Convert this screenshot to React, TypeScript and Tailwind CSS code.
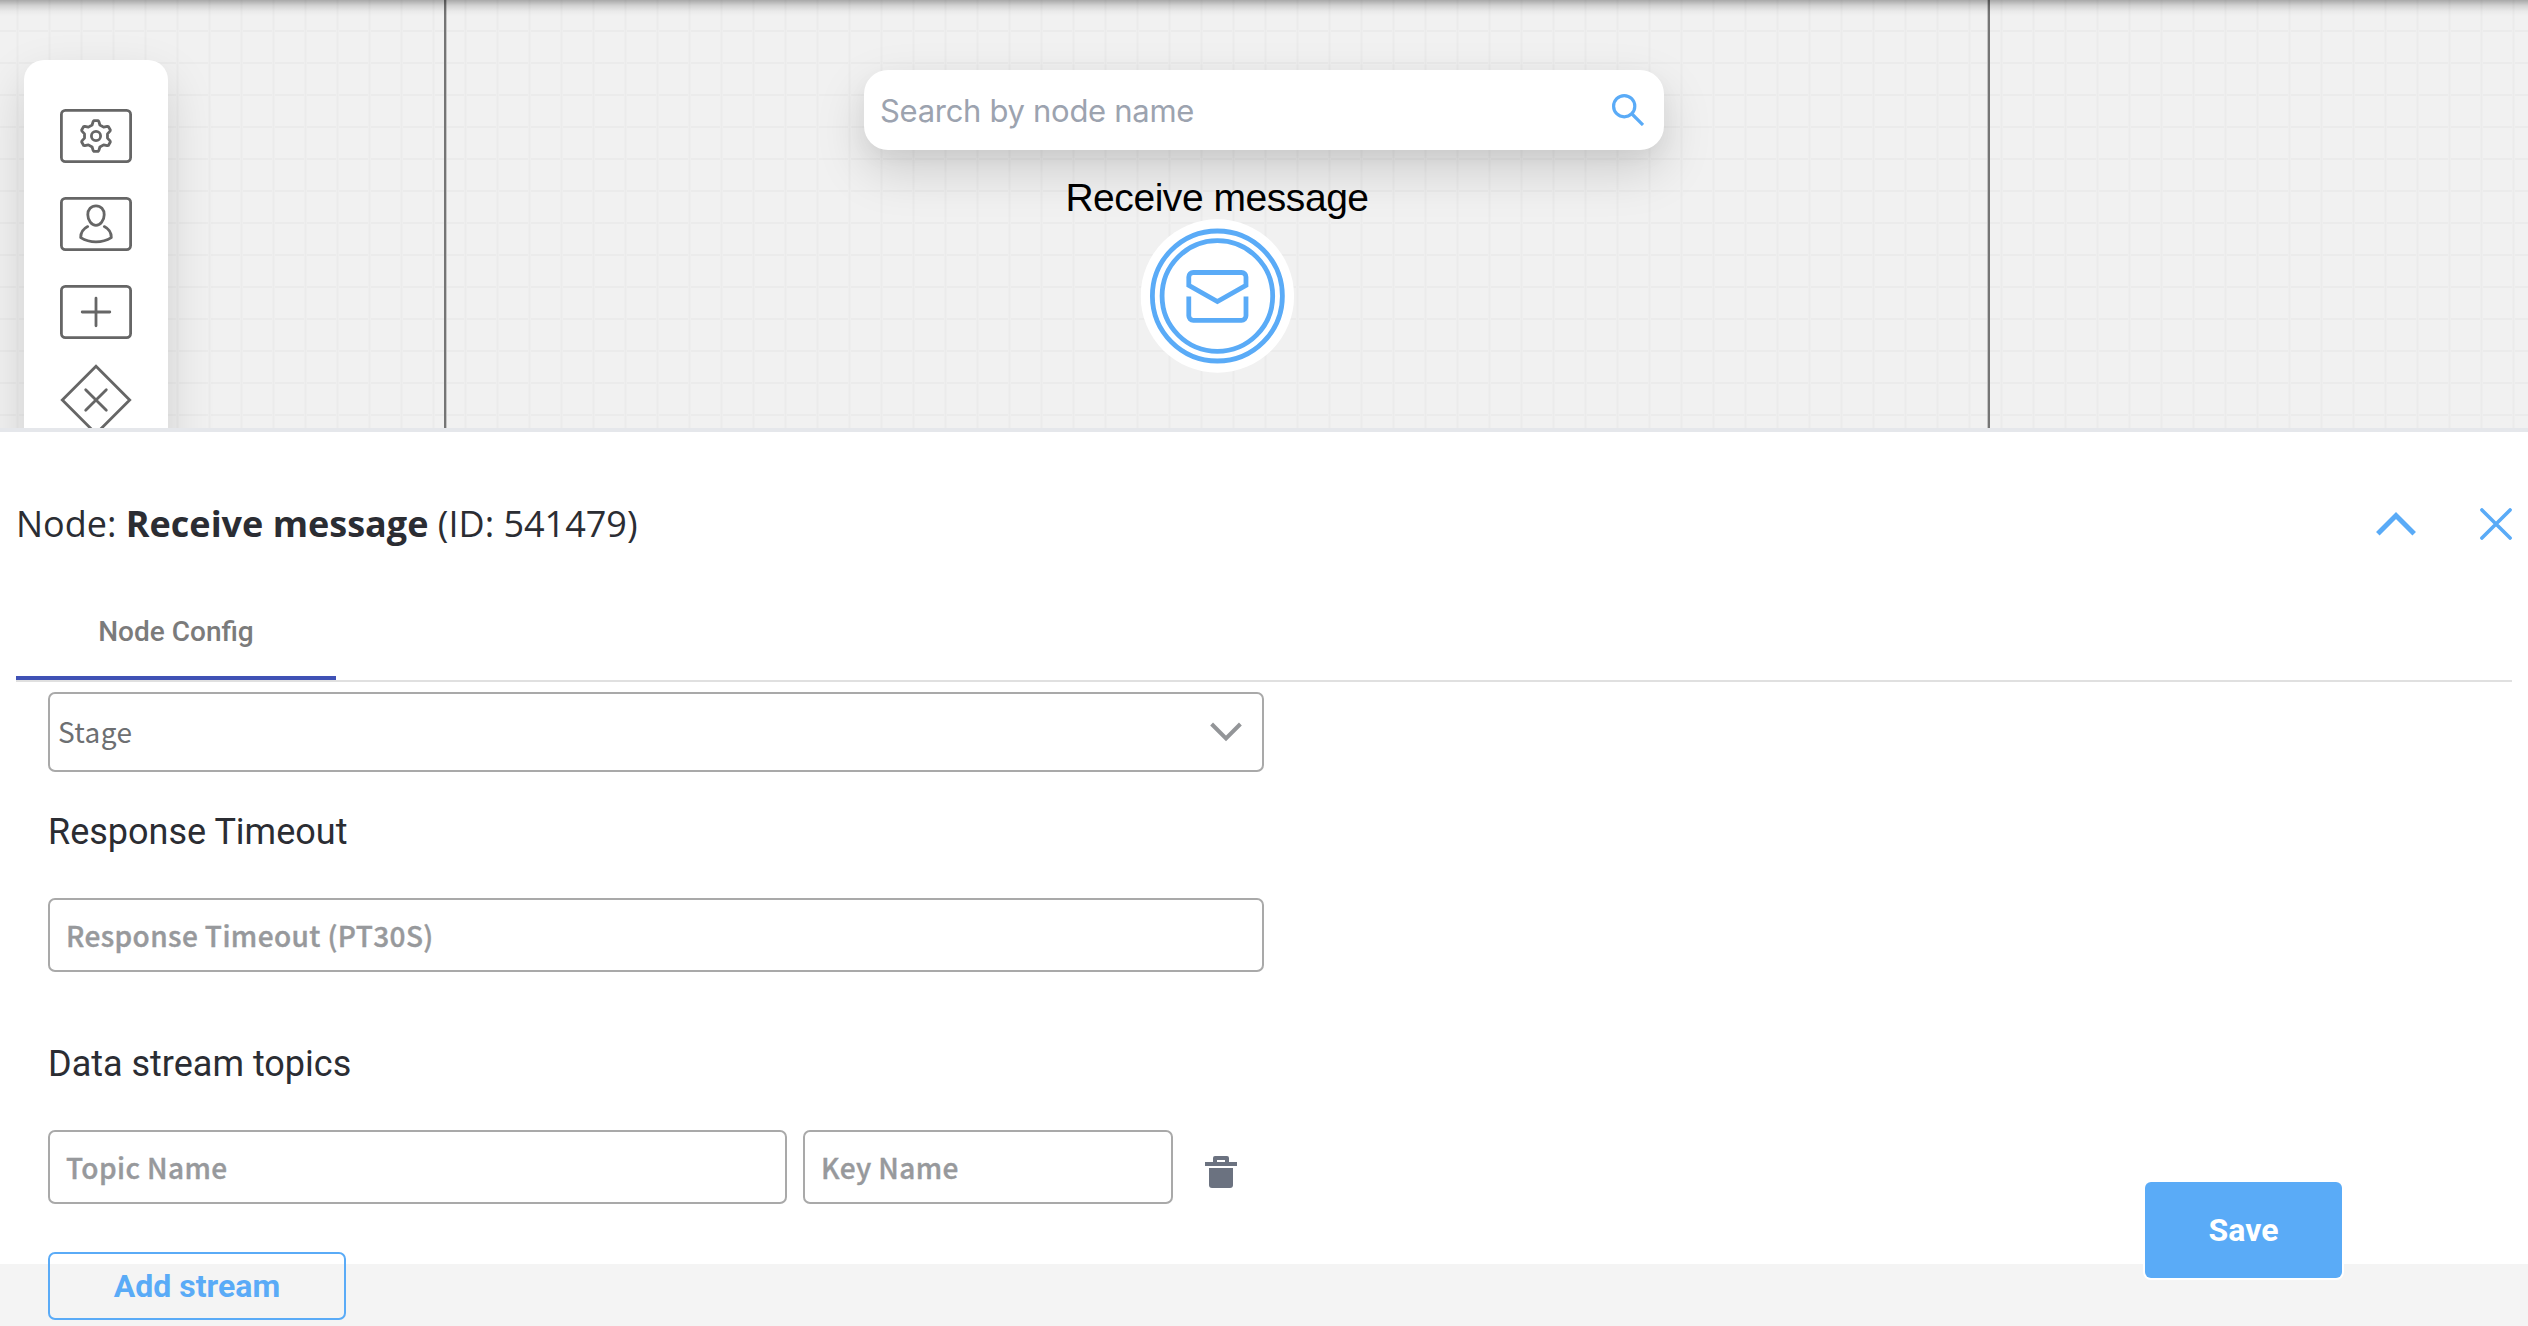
import React from "react";

const rad = (deg: number) => (deg * Math.PI) / 180;

/* Six-toothed gear outline centred on (cx, cy). */
function gearPath(cx: number, cy: number) {
  const tooth: [number, number][] = [
    [11, -3.9],
    [14.6, -2.8],
    [15.4, -2],
    [15.4, 2],
    [14.6, 2.8],
    [11, 3.9],
  ];
  const pts: string[] = [];
  for (let k = 0; k < 6; k++) {
    const a = rad(k * 60 - 90);
    for (const [r, t] of tooth) {
      const x = cx + r * Math.cos(a) - t * Math.sin(a);
      const y = cy + r * Math.sin(a) + t * Math.cos(a);
      pts.push(`${x.toFixed(2)} ${y.toFixed(2)}`);
    }
  }
  return `M${pts.join("L")}Z`;
}

function Frame({ children }: { children: React.ReactNode }) {
  return (
    <svg className="h-[54px] w-[72px] text-[#666]" viewBox="0 0 72 54" fill="none" stroke="currentColor" strokeWidth="2.8" strokeLinecap="round" strokeLinejoin="round">
      <rect x="1.4" y="1.4" width="69.2" height="51.2" rx="4" />
      {children}
    </svg>
  );
}

function Palette() {
  return (
    <div className="absolute left-6 top-[60px] flex h-[800px] w-36 flex-col items-center rounded-[20px] bg-white pt-8 shadow-[0_20px_50px_0_rgba(0,0,0,0.14)]">
      <div className="flex h-[88px] items-center">
        <Frame>
          <path d={gearPath(36, 27)} />
          <circle cx="36" cy="27" r="4.6" />
        </Frame>
      </div>
      <div className="flex h-[88px] items-center">
        <Frame>
          <path d="M36 8.8c4.9 0 8.2 3.7 8.2 8.9 0 5.6-3.9 10.6-8.2 10.6s-8.2-5-8.2-10.6c0-5.2 3.3-8.9 8.2-8.9z" />
          <path d="M27.7 29.6c-4 2-7 6.2-7 11 9 5.6 21.6 5.6 30.6 0 0-4.8-3-9-7-11" />
        </Frame>
      </div>
      <div className="flex h-[88px] items-center">
        <Frame>
          <path d="M36 13.2v27.6M22.2 27h27.6" />
        </Frame>
      </div>
      <div className="flex h-[88px] items-center">
        <svg className="h-[72px] w-[72px] text-[#666]" viewBox="0 0 72 72" fill="none" stroke="currentColor" strokeWidth="2.8">
          <path d="M36 2.3L69.7 36 36 69.7 2.3 36z" />
          <path d="M25.7 25.7l20.6 20.6M46.3 25.7L25.7 46.3" strokeLinecap="round" />
        </svg>
      </div>
    </div>
  );
}

function MessageNode() {
  return (
    <div className="absolute left-[1217px] top-[176px] flex -translate-x-1/2 flex-col items-center">
      <div className="whitespace-nowrap font-['Liberation_Sans',sans-serif] text-[39px] leading-[43px] tracking-[-0.45px] text-black">Receive message</div>
      <svg className="h-[154px] w-[154px] text-[#5aabf7]" viewBox="0 0 154 154" fill="none" stroke="currentColor" strokeWidth="4.8">
        <circle cx="77" cy="77" r="76.7" fill="#fff" stroke="none" />
        <circle cx="77" cy="77" r="65" />
        <circle cx="77" cy="77" r="55.3" />
        <path d="M48.4 66.3V58a4.5 4.5 0 0 1 4.5-4.5h48.2a4.5 4.5 0 0 1 4.5 4.5v8.3L77 82.5z" />
        <path d="M48.4 77.5v19.3a4.5 4.5 0 0 0 4.5 4.5h48.2a4.5 4.5 0 0 0 4.5-4.5V77.5" />
      </svg>
    </div>
  );
}

function SearchBar() {
  return (
    <div className="absolute left-[864px] top-[70px] flex h-20 w-[800px] items-center justify-between rounded-[24px] bg-white pl-4 pr-5 shadow-[0_20px_50px_0_rgba(0,0,0,0.15),0_8px_20px_0_rgba(0,0,0,0.04)]">
      <span className="pt-[2px] font-[Inter,sans-serif] text-[31px] leading-10 tracking-[-0.3px] text-[#9ca3af]">Search by node name</span>
      <svg className="h-8 w-8 text-[#5aabf7]" viewBox="0 0 32 32" fill="none" stroke="currentColor" strokeWidth="3.2">
        <circle cx="12.2" cy="12.2" r="10.6" />
        <path d="M20 20l11 11" />
      </svg>
    </div>
  );
}

function Canvas() {
  return (
    <section className="relative h-[428px] shrink-0 overflow-hidden bg-[#f1f1f1]">
      <div className="absolute inset-0 bg-[linear-gradient(to_right,#eeeeee_1px,#ebebeb_1px,#ebebeb_2px,#eeeeee_2px,#eeeeee_3px,transparent_3px),linear-gradient(to_bottom,#ebebeb_2px,transparent_2px)] bg-[length:32px_32px] bg-[position:16px_30px]" />
      <div className="absolute inset-y-0 left-[444px] w-[2px] bg-[#757575]" />
      <div className="absolute inset-y-0 left-[446px] w-px bg-[#c4c4c4]" />
      <div className="absolute inset-y-0 left-[1987px] w-px bg-[#c4c4c4]" />
      <div className="absolute inset-y-0 left-[1988px] w-[2px] bg-[#757575]" />
      <div className="absolute inset-x-0 top-0 h-4 bg-[linear-gradient(to_bottom,rgba(0,0,0,0.3),rgba(0,0,0,0.13)_35%,rgba(0,0,0,0.03)_70%,transparent)]" />
      <Palette />
      <SearchBar />
      <MessageNode />
    </section>
  );
}

function Field({ label, className }: { label: string; className: string }) {
  return (
    <div className={`flex h-[74px] items-center rounded-[7px] border-2 border-[#a9a9a9] bg-white pl-4 font-['Noto_Sans_CJK_SC',sans-serif] text-[28px] font-medium leading-10 tracking-[0.4px] text-[#97999c] [-webkit-text-stroke:0.4px_#97999c] ${className}`}>
      {label}
    </div>
  );
}

function Heading({ children, className }: { children: string; className: string }) {
  return <h3 className={`font-[Roboto,sans-serif] text-[36px] leading-[48px] text-[#2b2d33] ${className}`}>{children}</h3>;
}

export default function App() {
  return (
    <div className="relative flex h-[1326px] w-[2528px] flex-col overflow-hidden bg-[#f4f4f4]">
      <Canvas />
      <main className="h-[836px] shrink-0 border-t-4 border-[#e5e7eb] bg-white px-4 pt-[68px]">
        <header className="flex h-12 items-center justify-between">
          <h2 className="whitespace-pre font-['Open_Sans',sans-serif] text-[36px] leading-[48px] text-[#2b2d33]">
            Node: <b className="font-bold">Receive message</b> (ID: 541479)
          </h2>
          <div className="flex items-center gap-16 text-[#5aabf7]">
            <svg className="h-6 w-10" viewBox="0 0 40 24" fill="none" stroke="currentColor" strokeWidth="5">
              <path d="M1.8 21.8L20 3.6l18.2 18.2" />
            </svg>
            <svg className="h-8 w-8" viewBox="0 0 32 32" fill="none" stroke="currentColor" strokeWidth="3.6" strokeLinecap="round">
              <path d="M1.9 1.9l28.2 28.2M30.1 1.9L1.9 30.1" />
            </svg>
          </div>
        </header>

        <div className="mt-9 flex border-b-2 border-[#e0e0e0]">
          <div className="flex h-24 w-80 flex-col border-b-4 border-[#3f51b5] text-center font-[Roboto,sans-serif] text-[28px] font-medium leading-[96px] text-[#7b7b7b]">
            Node Config
          </div>
        </div>

        <form className="ml-8 mt-[10px] flex w-[1216px] flex-col">
          <div className="flex h-20 items-center justify-between rounded-[7px] border-2 border-[#a9a9a9] pl-2 pr-5 font-['Noto_Sans_CJK_SC',sans-serif] text-[28px] leading-10 text-[#6d6f72]">
            <span className="pb-[2px] tracking-[0.4px]">Stage</span>
            <svg className="h-5 w-8 text-[#939598]" viewBox="0 0 32 20" fill="none" stroke="currentColor" strokeWidth="4">
              <path d="M1.6 2L16 16.400 30.4 2" />
            </svg>
          </div>

          <Heading className="mt-9">Response Timeout</Heading>
          <Field label="Response Timeout (PT30S)" className="mt-[42px]" />

          <Heading className="mt-[68px]">Data stream topics</Heading>
          <div className="mt-[42px] flex items-center">
            <Field label="Topic Name" className="w-[739px]" />
            <Field label="Key Name" className="ml-4 w-[370px]" />
            <svg className="ml-8 mt-[10px] h-8 w-8 text-[#6b7280]" viewBox="0 0 32 32" fill="currentColor">
              <path fillRule="evenodd" d="M8 6V2a2 2 0 0 1 2-2h12a2 2 0 0 1 2 2v4h8v4H0V6zM12 4v2h8V4z" />
              <path d="M4 12h24v17a3 3 0 0 1-3 3H7a3 3 0 0 1-3-3z" />
            </svg>
          </div>

          <button type="button" className="mt-12 h-[68px] w-[298px] rounded-[7px] border-2 border-[#5aabf7] font-[Roboto,sans-serif] text-[32px] font-bold leading-none text-[#5aabf7]">
            Add stream
          </button>
        </form>
      </main>

      <button type="button" className="absolute left-[2145px] top-[1182px] h-24 w-[197px] rounded-[6px] bg-[#5aabf7] font-[Roboto,sans-serif] text-[32px] font-bold leading-none text-white ring-2 ring-white">
        Save
      </button>
    </div>
  );
}
